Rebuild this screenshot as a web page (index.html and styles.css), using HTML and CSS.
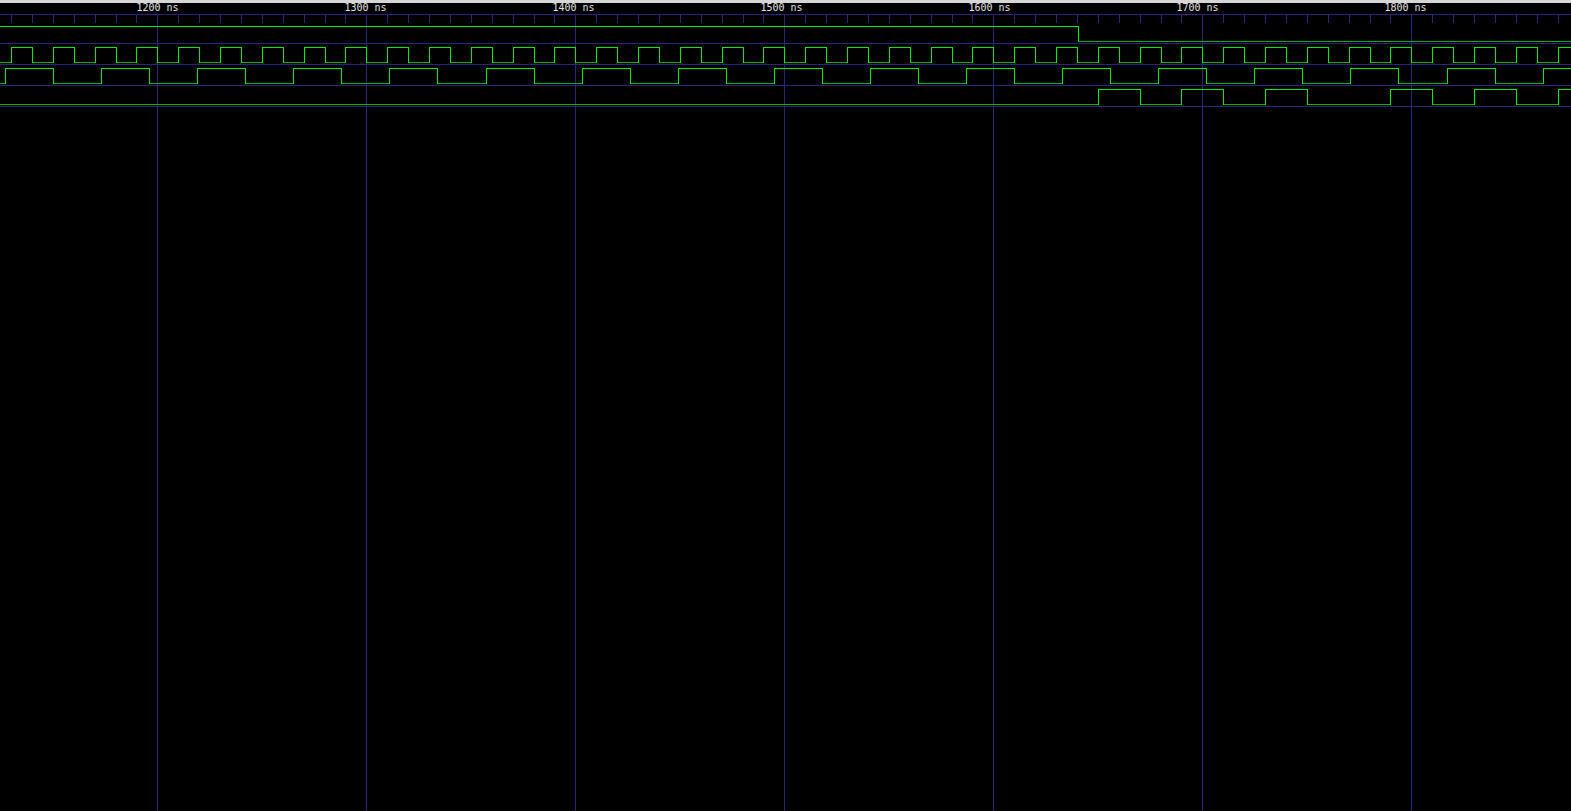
FILE: index.html
```html
<!DOCTYPE html>
<html lang="en">
<head>
<meta charset="utf-8">
<title>Waveform</title>
<link rel="stylesheet" href="styles.css">
</head>
<body>
<div class="topbar"></div>
<div class="wave-area">
<svg class="wave" width="1571" height="808" viewBox="0 3 1571 808" shape-rendering="crispEdges" xmlns="http://www.w3.org/2000/svg">
  <g class="grid">
    <path d="M0 14.5H1571M0 43.5H1571M0 64.5H1571M0 85.5H1571M0 106.5H1571"/>
    <path d="M157.5 15V811M366.5 15V811M575.5 15V811M784.5 15V811M993.5 15V811M1202.5 15V811M1411.5 15V811"/>
    <path d="M11.5 15V23M32.5 15V23M53.5 15V23M74.5 15V23M95.5 15V23M116.5 15V23M136.5 15V23M157.5 15V23M178.5 15V23M199.5 15V23M220.5 15V23M241.5 15V23M262.5 15V23M283.5 15V23M304.5 15V23M325.5 15V23M345.5 15V23M366.5 15V23M387.5 15V23M408.5 15V23M429.5 15V23M450.5 15V23M471.5 15V23M492.5 15V23M513.5 15V23M534.5 15V23M554.5 15V23M575.5 15V23M596.5 15V23M617.5 15V23M638.5 15V23M659.5 15V23M680.5 15V23M701.5 15V23M722.5 15V23M743.5 15V23M763.5 15V23M784.5 15V23M805.5 15V23M826.5 15V23M847.5 15V23M868.5 15V23M889.5 15V23M910.5 15V23M931.5 15V23M952.5 15V23M972.5 15V23M993.5 15V23M1014.5 15V23M1035.5 15V23M1056.5 15V23M1077.5 15V23M1098.5 15V23M1119.5 15V23M1140.5 15V23M1161.5 15V23M1181.5 15V23M1202.5 15V23M1223.5 15V23M1244.5 15V23M1265.5 15V23M1286.5 15V23M1307.5 15V23M1328.5 15V23M1349.5 15V23M1370.5 15V23M1390.5 15V23M1411.5 15V23M1432.5 15V23M1453.5 15V23M1474.5 15V23M1495.5 15V23M1516.5 15V23M1537.5 15V23M1558.5 15V23"/>
  </g>
  <g class="labels">
    <text x="136.5" y="11">1200 ns</text>
    <text x="344.5" y="11">1300 ns</text>
    <text x="552.5" y="11">1400 ns</text>
    <text x="760.5" y="11">1500 ns</text>
    <text x="968.5" y="11">1600 ns</text>
    <text x="1176.5" y="11">1700 ns</text>
    <text x="1384.5" y="11">1800 ns</text>
  </g>
  <g class="sig-low">
    <path d="M1078.5 41.5H1571"/>
    <path d="M0 62.5H11.5M32.5 62.5H53.5M74.5 62.5H95.5M116.5 62.5H136.5M157.5 62.5H178.5M199.5 62.5H220.5M241.5 62.5H262.5M283.5 62.5H304.5M325.5 62.5H345.5M366.5 62.5H387.5M408.5 62.5H429.5M450.5 62.5H471.5M492.5 62.5H513.5M534.5 62.5H554.5M575.5 62.5H596.5M617.5 62.5H638.5M659.5 62.5H680.5M701.5 62.5H722.5M743.5 62.5H763.5M784.5 62.5H805.5M826.5 62.5H847.5M868.5 62.5H889.5M910.5 62.5H931.5M952.5 62.5H972.5M993.5 62.5H1014.5M1035.5 62.5H1056.5M1077.5 62.5H1098.5M1119.5 62.5H1140.5M1161.5 62.5H1181.5M1202.5 62.5H1223.5M1244.5 62.5H1265.5M1286.5 62.5H1307.5M1328.5 62.5H1349.5M1370.5 62.5H1390.5M1411.5 62.5H1432.5M1453.5 62.5H1474.5M1495.5 62.5H1516.5M1537.5 62.5H1558.5"/>
    <path d="M0 83.5H5.5M53.5 83.5H101.5M149.5 83.5H197.5M245.5 83.5H293.5M341.5 83.5H389.5M437.5 83.5H486.5M534.5 83.5H582.5M630.5 83.5H678.5M726.5 83.5H774.5M822.5 83.5H870.5M918.5 83.5H966.5M1014.5 83.5H1062.5M1110.5 83.5H1158.5M1206.5 83.5H1254.5M1302.5 83.5H1350.5M1398.5 83.5H1447.5M1495.5 83.5H1543.5"/>
    <path d="M0 104.5H1098.5M1140.5 104.5H1181.5M1223.5 104.5H1265.5M1307.5 104.5H1390.5M1432.5 104.5H1474.5M1516.5 104.5H1558.5"/>
  </g>
  <g class="sig-high">
    <path d="M0 26.5H1078.5V41.5"/>
    <path d="M11.5 62.5V47.5H32.5V62.5M53.5 62.5V47.5H74.5V62.5M95.5 62.5V47.5H116.5V62.5M136.5 62.5V47.5H157.5V62.5M178.5 62.5V47.5H199.5V62.5M220.5 62.5V47.5H241.5V62.5M262.5 62.5V47.5H283.5V62.5M304.5 62.5V47.5H325.5V62.5M345.5 62.5V47.5H366.5V62.5M387.5 62.5V47.5H408.5V62.5M429.5 62.5V47.5H450.5V62.5M471.5 62.5V47.5H492.5V62.5M513.5 62.5V47.5H534.5V62.5M554.5 62.5V47.5H575.5V62.5M596.5 62.5V47.5H617.5V62.5M638.5 62.5V47.5H659.5V62.5M680.5 62.5V47.5H701.5V62.5M722.5 62.5V47.5H743.5V62.5M763.5 62.5V47.5H784.5V62.5M805.5 62.5V47.5H826.5V62.5M847.5 62.5V47.5H868.5V62.5M889.5 62.5V47.5H910.5V62.5M931.5 62.5V47.5H952.5V62.5M972.5 62.5V47.5H993.5V62.5M1014.5 62.5V47.5H1035.5V62.5M1056.5 62.5V47.5H1077.5V62.5M1098.5 62.5V47.5H1119.5V62.5M1140.5 62.5V47.5H1161.5V62.5M1181.5 62.5V47.5H1202.5V62.5M1223.5 62.5V47.5H1244.5V62.5M1265.5 62.5V47.5H1286.5V62.5M1307.5 62.5V47.5H1328.5V62.5M1349.5 62.5V47.5H1370.5V62.5M1390.5 62.5V47.5H1411.5V62.5M1432.5 62.5V47.5H1453.5V62.5M1474.5 62.5V47.5H1495.5V62.5M1516.5 62.5V47.5H1537.5V62.5M1558.5 62.5V47.5H1571"/>
    <path d="M5.5 83.5V68.5H53.5V83.5M101.5 83.5V68.5H149.5V83.5M197.5 83.5V68.5H245.5V83.5M293.5 83.5V68.5H341.5V83.5M389.5 83.5V68.5H437.5V83.5M486.5 83.5V68.5H534.5V83.5M582.5 83.5V68.5H630.5V83.5M678.5 83.5V68.5H726.5V83.5M774.5 83.5V68.5H822.5V83.5M870.5 83.5V68.5H918.5V83.5M966.5 83.5V68.5H1014.5V83.5M1062.5 83.5V68.5H1110.5V83.5M1158.5 83.5V68.5H1206.5V83.5M1254.5 83.5V68.5H1302.5V83.5M1350.5 83.5V68.5H1398.5V83.5M1447.5 83.5V68.5H1495.5V83.5M1543.5 83.5V68.5H1571"/>
    <path d="M1098.5 104.5V89.5H1140.5V104.5M1181.5 104.5V89.5H1223.5V104.5M1265.5 104.5V89.5H1307.5V104.5M1390.5 104.5V89.5H1432.5V104.5M1474.5 104.5V89.5H1516.5V104.5M1558.5 104.5V89.5H1571"/>
  </g>
</svg>
</div>
</body>
</html>
```

FILE: styles.css
```css
html, body {
  margin: 0;
  padding: 0;
  background: #000000;
  overflow: hidden;
}

.topbar {
  height: 3px;
  background: #d6d6d6;
}

.wave-area {
  display: flex;
  background: #000000;
}

.wave {
  display: block;
}

.grid {
  fill: none;
  stroke: #262680;
  stroke-width: 1;
}

.labels {
  font-family: "DejaVu Sans Mono", "Liberation Mono", monospace;
  font-size: 10px;
  fill: #e2e2e6;
}

.sig-low {
  fill: none;
  stroke: #00b800;
  stroke-width: 1;
}

.sig-high {
  fill: none;
  stroke: #00ee00;
  stroke-width: 1;
}
```
